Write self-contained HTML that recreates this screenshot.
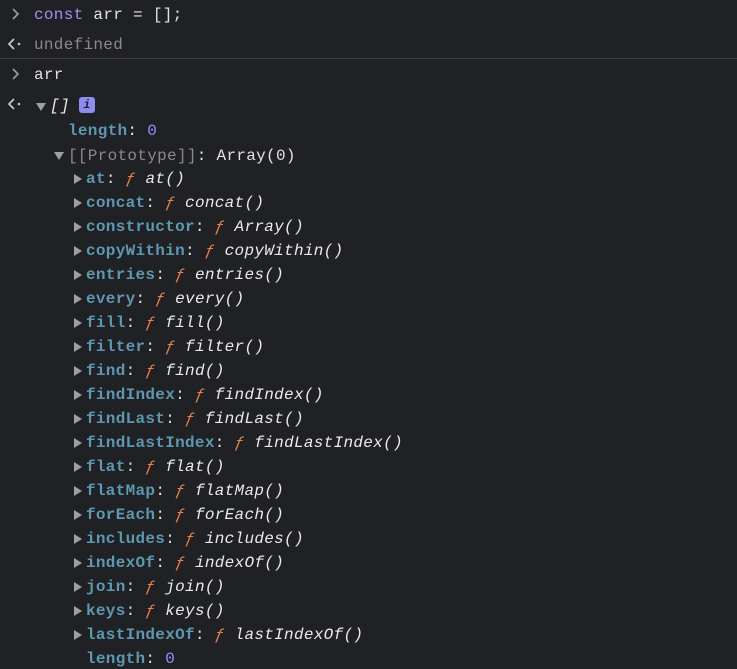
<!DOCTYPE html>
<html><head><meta charset="utf-8"><style>
body{margin:0;background:#202124;width:737px;height:669px;overflow:hidden;font-family:"Liberation Mono",monospace;font-size:16px;letter-spacing:0.3px;color:#e3e3e3}
.l{position:absolute;white-space:pre;line-height:20px}
.k{color:#5d97b0;font-weight:bold}
.f{color:#e8804a;font-style:italic}
.n{font-style:italic;color:#eaeaea}
.p{color:#9a8cff}
.g{color:#8a8a8a}
.t{position:absolute;width:0;height:0}
.tr{border-top:5px solid transparent;border-bottom:5px solid transparent;border-left:8px solid #9aa0a6}
.td{border-left:5px solid transparent;border-right:5px solid transparent;border-top:8px solid #9aa0a6}
svg{position:absolute}
</style></head><body>
<svg style="left:10px;top:8px" width="10" height="12"><path d="M3 1 L8 6 L3 11" fill="none" stroke="#9aa0a6" stroke-width="1.6"/></svg>
<div class="l" style="left:34px;top:5px"><span style="color:#a78bfa">const</span> arr = [];</div>
<svg style="left:8px;top:38px" width="16" height="12"><path d="M6 1 L1 6 L6 11" fill="none" stroke="#c4c7cc" stroke-width="1.8"/><circle cx="11" cy="6" r="1.3" fill="#c4c7cc"/></svg>
<div class="l g" style="left:34px;top:35px">undefined</div>
<div style="position:absolute;left:0;top:58px;width:737px;height:1px;background:#3c3c3c"></div>
<svg style="left:10px;top:68px" width="10" height="12"><path d="M3 1 L8 6 L3 11" fill="none" stroke="#9aa0a6" stroke-width="1.6"/></svg>
<div class="l" style="left:34px;top:65px">arr</div>
<svg style="left:8px;top:98px" width="16" height="12"><path d="M6 1 L1 6 L6 11" fill="none" stroke="#c4c7cc" stroke-width="1.8"/><circle cx="11" cy="6" r="1.3" fill="#c4c7cc"/></svg>
<div class="t td" style="left:36px;top:103px"></div>
<div class="l n" style="left:50px;top:96px">[]</div>
<div style="position:absolute;left:79px;top:97px;width:16px;height:16px;background:#8f8cf0;border-radius:3px;color:#1f1f3a;font-size:12px;text-align:center;line-height:16px;font-style:italic;font-weight:bold">i</div>
<div class="l" style="left:68px;top:121px"><span class="k">length</span>: <span class="p">0</span></div>
<div class="t td" style="left:54px;top:152px"></div>
<div class="l" style="left:68px;top:146px"><span class="g">[[Prototype]]</span>: Array(0)</div>
<div id="rows"></div>
<script>
var names=["at","concat","constructor","copyWithin","entries","every","fill","filter","find","findIndex","findLast","findLastIndex","flat","flatMap","forEach","includes","indexOf","join","keys","lastIndexOf"];
var h="";
names.forEach(function(n,i){var y=169+i*24;var fn=n=="constructor"?"Array":n;
h+='<div class="t tr" style="left:74px;top:'+(y+5)+'px"></div><div class="l" style="left:86px;top:'+y+'px"><span class="k">'+n+'</span>: <span class="f">ƒ</span> <span class="n">'+fn+'()</span></div>';});
h+='<div class="l" style="left:86px;top:649px"><span class="k">length</span>: <span class="p">0</span></div>';
document.getElementById("rows").innerHTML=h;
</script>
</body></html>
